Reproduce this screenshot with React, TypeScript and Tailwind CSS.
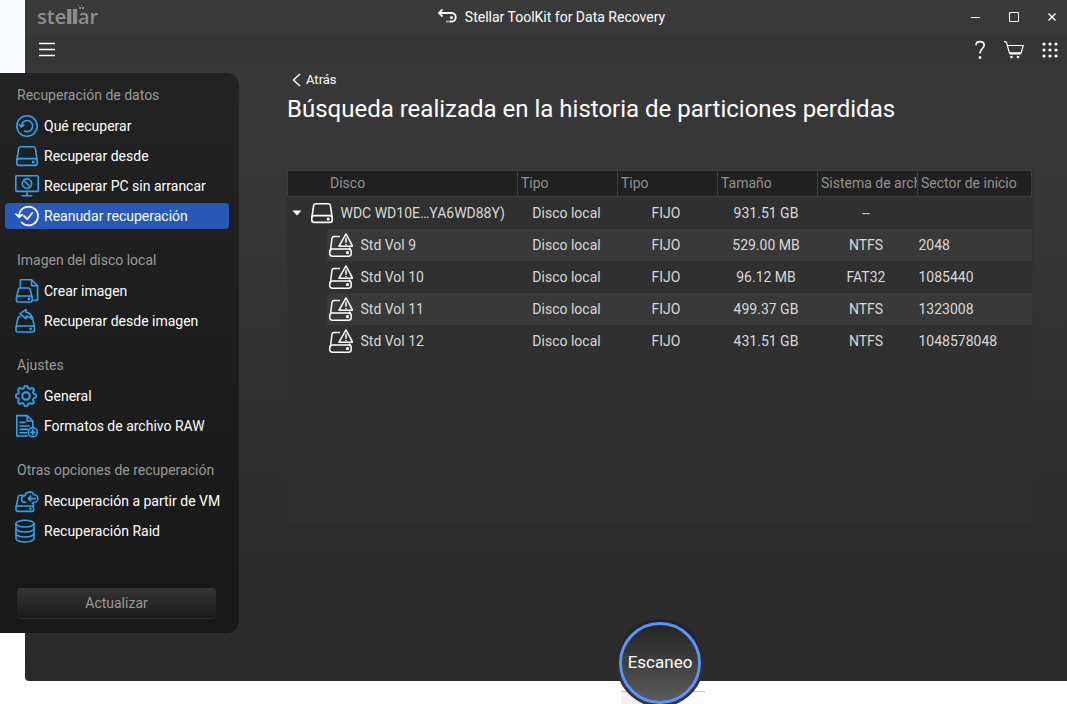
import type { ReactNode } from "react";
import { BsGear } from "react-icons/bs";

type IconProps = { children: ReactNode; className?: string };

function Icon({ children, className = "w-6 h-6" }: IconProps) {
  return (
    <svg
      className={className}
      viewBox="0 0 24 24"
      fill="none"
      stroke="currentColor"
      strokeWidth={1.6}
      strokeLinecap="round"
      strokeLinejoin="round"
      aria-hidden="true"
    >
      {children}
    </svg>
  );
}

const icons = {
  target: (
    <Icon>
      <circle cx="12" cy="12" r="10.2" />
      <path d="M6.5 12.2a5.6 5.6 0 1 1 3 4.8" />
      <path d="M4.4 10.8l2.1 2 2.3-1.8" />
    </Icon>
  ),
  drive: (
    <Icon>
      <path d="M2 15.5L3.6 4.6a2 2 0 0 1 2-1.8h12.8a2 2 0 0 1 2 1.8L22 15.5" />
      <rect x="1.8" y="14.6" width="20.4" height="6.8" rx="2.4" />
      <circle cx="18.2" cy="18" r="0.7" />
    </Icon>
  ),
  monitor: (
    <Icon>
      <rect x="0.8" y="1.8" width="22.4" height="15.6" rx="0.8" />
      <circle cx="12" cy="9.6" r="4.7" />
      <path d="M8.8 6.4l6.4 6.4M12 17.4v4M7.2 21.8h9.6" />
    </Icon>
  ),
  resume: (
    <Icon>
      <g strokeWidth={1.8}>
        <path d="M4.2 11.5a9.4 9.4 0 1 1 2.6 7" />
        <path d="M1 10.2l3.2 3 3-2.6" />
        <path d="M9 12l3.2 3.2 5-6.2" />
      </g>
    </Icon>
  ),
  createImage: (
    <Icon>
      <path d="M5.4 8.6V0.8h11.2l6 6v14.6h-3.6M16.6 0.8v6h6" />
      <path d="M1.8 17.2l1.6-7a1.6 1.6 0 0 1 1.6-1.2h8.4a1.6 1.6 0 0 1 1.6 1.2l1.8 7" />
      <rect x="1.4" y="17" width="15.8" height="6" rx="2" />
      <circle cx="14" cy="20" r="0.6" />
    </Icon>
  ),
  fromImage: (
    <Icon>
      <path d="M5 7.2C3.2 7.4 3 8.4 2.8 9.4L1.2 17.4M15.6 7.2c1.6 0.2 2 1.2 2.2 2.2l1.4 8" />
      <rect x="1" y="17" width="18.4" height="6" rx="2" />
      <path d="M5 4.6L11 0.6v2.8c4 0.6 6 3 5.8 6.6-1.4-2-3.2-2.8-5.8-2.6v2.4z" />
      <circle cx="15.6" cy="20" r="0.6" />
    </Icon>
  ),
  raw: (
    <Icon>
      <path d="M12 22H1.8V1.6h10.4l5.6 5.4v6M12.2 1.6V7h5.6" />
      <path d="M5 8.4h5M5 12h9.4M5 15.4h7.4M5 18.8h6.4" />
      <circle cx="17.8" cy="18.2" r="4.6" />
      <path d="M17.8 15.8v4.8M15.4 18.2h4.8" />
    </Icon>
  ),
  cloudDrive: (
    <Icon>
      <path d="M8 6.2H5.2a2 2 0 0 0-2 1.8L1.2 17.4M18.4 14.6v3" />
      <rect x="1" y="17" width="17.6" height="5.4" rx="2" />
      <path d="M10.8 13.2H9.6a3.2 3.2 0 0 1 .4-6.4 4.6 4.6 0 0 1 8.8-1 3.7 3.7 0 0 1 .8 7.4l-2.2 1" />
      <path d="M20.4 9.6H13.4M15.8 7.2l-2.6 2.4 2.6 2.4" />
      <circle cx="15.4" cy="19.6" r="0.5" />
    </Icon>
  ),
  raid: (
    <Icon>
      <ellipse cx="10" cy="4.6" rx="9" ry="3.4" />
      <path d="M1 4.6v15c0 1.9 4 3.4 9 3.4s9-1.5 9-3.4v-15" />
      <path d="M1 9.6C1 11.5 5 13 10 13s9-1.5 9-3.4M1 14.6C1 16.5 5 18 10 18s9-1.5 9-3.4" />
    </Icon>
  ),
};

const sections = [
  {
    title: "Recuperación de datos",
    items: [
      { label: "Qué recuperar", icon: icons.target },
      { label: "Recuperar desde", icon: icons.drive },
      { label: "Recuperar PC sin arrancar", icon: icons.monitor },
      { label: "Reanudar recuperación", icon: icons.resume, active: true },
    ],
  },
  {
    title: "Imagen del disco local",
    items: [
      { label: "Crear imagen", icon: icons.createImage },
      { label: "Recuperar desde imagen", icon: icons.fromImage },
    ],
  },
  {
    title: "Ajustes",
    items: [
      { label: "General", icon: <BsGear className="w-[22px] h-[22px]" strokeWidth={0.5} /> },
      { label: "Formatos de archivo RAW", icon: icons.raw },
    ],
  },
  {
    title: "Otras opciones de recuperación",
    items: [
      { label: "Recuperación a partir de VM", icon: icons.cloudDrive },
      { label: "Recuperación Raid", icon: icons.raid },
    ],
  },
];

const volumes = [
  { name: "Std Vol 9", size: "529.00 MB", fs: "NTFS", sector: "2048" },
  { name: "Std Vol 10", size: "96.12 MB", fs: "FAT32", sector: "1085440" },
  { name: "Std Vol 11", size: "499.37 GB", fs: "NTFS", sector: "1323008" },
  { name: "Std Vol 12", size: "431.51 GB", fs: "NTFS", sector: "1048578048" },
];

function Logo() {
  return (
    <div className="relative flex items-baseline font-['Open_Sans'] text-xl leading-6 font-semibold text-[#8e8e8e]">
      <span>ste</span>
      <span className="font-[Inter] font-black">ll</span>
      <span>ar</span>
      <svg className="absolute left-[41px] top-0 w-2 h-2" viewBox="0 0 8 8" fill="currentColor" aria-hidden="true">
        <path d="M0 0h1v1H0zM3 0h1v1H3zM1 2h2v2H1zM4 2h2v2H4z" />
      </svg>
    </div>
  );
}

function TitleBar() {
  return (
    <header className="flex h-9 items-center justify-between pb-0.5 pl-3 pr-2.5">
      <div className="flex-1">
        <Logo />
      </div>
      <div className="flex items-center gap-2 pl-2 text-sm">
        <svg className="w-5 h-5" viewBox="0 0 20 20" fill="none" stroke="currentColor" strokeWidth="1.8" aria-hidden="true">
          <path d="M5.5 2.5L2 6l3.500 3.5M2 6h12.5a4 4 0 0 1 0 8.5H13" />
          <circle cx="14.5" cy="10.5" r="1.6" fill="currentColor" stroke="none" />
          <path d="M9.5 14.5h1M11.5 14.5h1" />
        </svg>
        <h1>Stellar ToolKit for Data Recovery</h1>
      </div>
      <div className="flex flex-1 items-center justify-end gap-7">
        <button type="button" aria-label="Minimizar">
          <svg className="w-2.5 h-2.5" viewBox="0 0 10 10" stroke="currentColor"><path d="M0 5.5h9" /></svg>
        </button>
        <button type="button" aria-label="Maximizar">
          <svg className="w-2.5 h-2.5" viewBox="0 0 10 10" fill="none" stroke="currentColor"><path d="M.5.5h9v9h-9z" /></svg>
        </button>
        <button type="button" aria-label="Cerrar">
          <svg className="w-2.5 h-2.5" viewBox="0 0 10 10" stroke="currentColor" strokeWidth="1.4"><path d="M1.5 1.5l7 7M8.5 1.5l-7 7" /></svg>
        </button>
      </div>
    </header>
  );
}

function ToolBar() {
  return (
    <nav className="flex h-7 items-center justify-between bg-[#353535] pl-3.5 pr-[9px]">
      <button type="button" aria-label="Menú">
        <svg className="w-4 h-4" viewBox="0 0 16 16" stroke="currentColor" strokeWidth="1.3"><path d="M0 1.5h16M0 7.5h16M0 13.5h16" /></svg>
      </button>
      <div className="flex items-center gap-[18px]">
        <button type="button" aria-label="Ayuda">
          <svg className="w-3 h-5" viewBox="0 0 12 20" fill="none" stroke="currentColor" strokeWidth="1.6">
            <path d="M2 5.2C2 2.8 3.8 1.6 6 1.6s4.2 1.2 4.2 3.7C10.2 8.5 6 8.8 6 13.5" />
            <circle cx="6" cy="17.600" r="0.7" />
          </svg>
        </button>
        <button type="button" aria-label="Carrito">
          <svg className="w-5 h-5" viewBox="0 0 20 20" fill="none" stroke="currentColor" strokeWidth="1.2">
            <path d="M0 1.6h1.6l1 1.2 2.8 10h11.8l2-7.3H3.4M5.6 13.8h11.2" />
            <circle cx="7.5" cy="17" r="0.7" />
            <circle cx="14" cy="17" r="0.7" />
          </svg>
        </button>
        <button type="button" aria-label="Aplicaciones">
          <svg className="w-4 h-4" viewBox="0 0 16 16" fill="currentColor">
            {[2, 8, 14].map((y) => [2, 8, 14].map((x) => <circle key={`${x}-${y}`} cx={x} cy={y} r="1.6" />))}
          </svg>
        </button>
      </div>
    </nav>
  );
}

function Sidebar() {
  return (
    <aside className="-ml-[25px] flex w-[239px] shrink-0 flex-col rounded-r-xl bg-linear-to-b from-[#222222] to-[#181818] pt-2 pb-3.5 text-sm">
      <div className="flex flex-col gap-[15px]">
        {sections.map((section) => (
          <section key={section.title}>
            <h2 className="mb-0.5 flex h-7 items-center pl-[17px] text-[#9a9a9a]">{section.title}</h2>
            <ul>
              {section.items.map((item) => (
                <li key={item.label} className="py-0.5 pl-[5px] pr-2.5">
                  <a
                    href="#"
                    className={`flex h-[26px] items-center gap-[5px] rounded pl-2.5 text-white ${
                      "active" in item ? "bg-[#2859b8]" : ""
                    }`}
                  >
                    <span className={`w-6 ${"active" in item ? "" : "text-[#2ea3f2]"}`}>{item.icon}</span>
                    <span className="whitespace-nowrap">{item.label}</span>
                  </a>
                </li>
              ))}
            </ul>
          </section>
        ))}
      </div>
      <button
        type="button"
        className="mt-[42px] ml-[17px] mr-[23px] h-[31px] rounded border-b border-[#2f2f2f] bg-linear-to-b from-[#353535] to-[#1a1a1a] text-[#9a9a9a]"
      >
        Actualizar
      </button>
    </aside>
  );
}

function VolumeIcon() {
  return (
    <svg className="w-6 h-6 text-white" viewBox="0 0 24 24" fill="none" stroke="currentColor" strokeWidth="1.5" strokeLinejoin="round" aria-hidden="true">
      <path d="M11 3.5H5a2 2 0 0 0-2 1.8L1.4 18M20.5 14.5l1.2 3" />
      <rect x="0.8" y="16" width="21.4" height="7.2" rx="2.6" />
      <path d="M17 .8l6.600 12.400H10z" />
      <path d="M17 4.8v5M17 11v1" />
      <circle cx="18.5" cy="19.6" r="0.9" fill="currentColor" />
    </svg>
  );
}

function DiskTable() {
  const head = "h-[26px] overflow-hidden border border-[#3d3d3d] bg-[#202020] pb-0.5 text-left font-normal whitespace-nowrap";
  return (
    <table className="w-full table-fixed border-collapse text-sm text-[#d8d8d8]">
      <colgroup>
        <col className="w-[230px]" />
        <col className="w-[100px]" />
        <col className="w-[100px]" />
        <col className="w-[100px]" />
        <col className="w-[100px]" />
        <col />
      </colgroup>
      <thead className="text-[#929292]">
        <tr>
          <th className={`${head} pl-[42px]`}>Disco</th>
          <th className={`${head} pl-[3px]`}>Tipo</th>
          <th className={`${head} pl-[3px]`}>Tipo</th>
          <th className={`${head} pl-[3px]`}>Tamaño</th>
          <th className={`${head} pl-[3px]`}>
            <div className="overflow-hidden">Sistema de archivos</div>
          </th>
          <th className={`${head} pl-[3px]`}>Sector de inicio</th>
        </tr>
      </thead>
      <tbody className="text-center">
        <tr className="h-8">
          <td>
            <div className="flex items-center pl-1">
              <svg className="w-2.5 h-2.5" viewBox="0 0 10 10" fill="#fff" aria-hidden="true"><path d="M.5 2.5h9L5 7.500z" /></svg>
              <span className="ml-2 text-white">{icons.drive}</span>
              <span className="ml-[7px] whitespace-nowrap">WDC WD10E…YA6WD88Y)</span>
            </div>
          </td>
          <td className="pr-0.5">Disco local</td>
          <td className="pr-[3px]">FIJO</td>
          <td className="pr-[3px]">931.51 GB</td>
          <td className="pr-[3px]">--</td>
          <td />
        </tr>
        {volumes.map((v) => (
          <tr key={v.name} className="group h-8">
            <td className="pl-[39px]">
              <div className="flex h-8 items-center gap-2 pl-0.5 group-even:bg-[#393939]">
                <VolumeIcon />
                {v.name}
              </div>
            </td>
            <td className="pr-0.5 group-even:bg-[#393939]">Disco local</td>
            <td className="pr-[3px] group-even:bg-[#393939]">FIJO</td>
            <td className="pr-[3px] group-even:bg-[#393939]">{v.size}</td>
            <td className="pr-[3px] group-even:bg-[#393939]">{v.fs}</td>
            <td className="pl-px text-left group-even:bg-[#393939]">{v.sector}</td>
          </tr>
        ))}
      </tbody>
    </table>
  );
}

export default function App() {
  return (
    <div className="relative min-h-screen overflow-hidden bg-white font-[Roboto,sans-serif] text-white">
      <div className="absolute left-0 top-0 h-[73px] w-6 bg-[#f7faff]" />
      <div className="relative ml-[25px] rounded-bl bg-linear-to-b from-[#3a3a3a] to-[#2a2a2a]">
        <TitleBar />
        <ToolBar />
        <div className="flex items-start pt-[9px]">
          <Sidebar />
          <main className="ml-12 mr-[34px] flex min-w-0 flex-1 flex-col">
            <a href="#" className="flex h-3.5 items-center gap-1 pl-[5px] text-[13px]">
              <svg className="w-2.5 h-3.5" viewBox="0 0 10 14" fill="none" stroke="currentColor" strokeWidth="1.4" aria-hidden="true">
                <path d="M8 1L1.500 7L8 13" />
              </svg>
              Atrás
            </a>
            <h2 className="mt-1.5 text-2xl leading-8">Búsqueda realizada en la historia de particiones perdidas</h2>
            <div className="mt-[45px] min-h-[352px] bg-[#303030] pr-px">
              <DiskTable />
            </div>
            <div className="relative mx-auto mt-[97px] -mb-[26px] flex">
              <div className="absolute bottom-0 left-[5px] h-4 w-[84px] border-t border-[#c4c4c4] bg-linear-to-r from-[#f2f2f2] from-50% to-white to-50%" />
              <button
                type="button"
                className="relative h-[88px] w-[88px] rounded-full bg-linear-to-b from-[#202020] to-[#3a3a3a] p-[3px]"
              >
                <span className="flex h-[82px] w-full items-center justify-center rounded-full border-[3px] border-[#5b93fb] bg-linear-to-b from-[#242424] to-[#5c5c5c] text-[17px]">
                  Escaneo
                </span>
              </button>
            </div>
          </main>
        </div>
      </div>
    </div>
  );
}
